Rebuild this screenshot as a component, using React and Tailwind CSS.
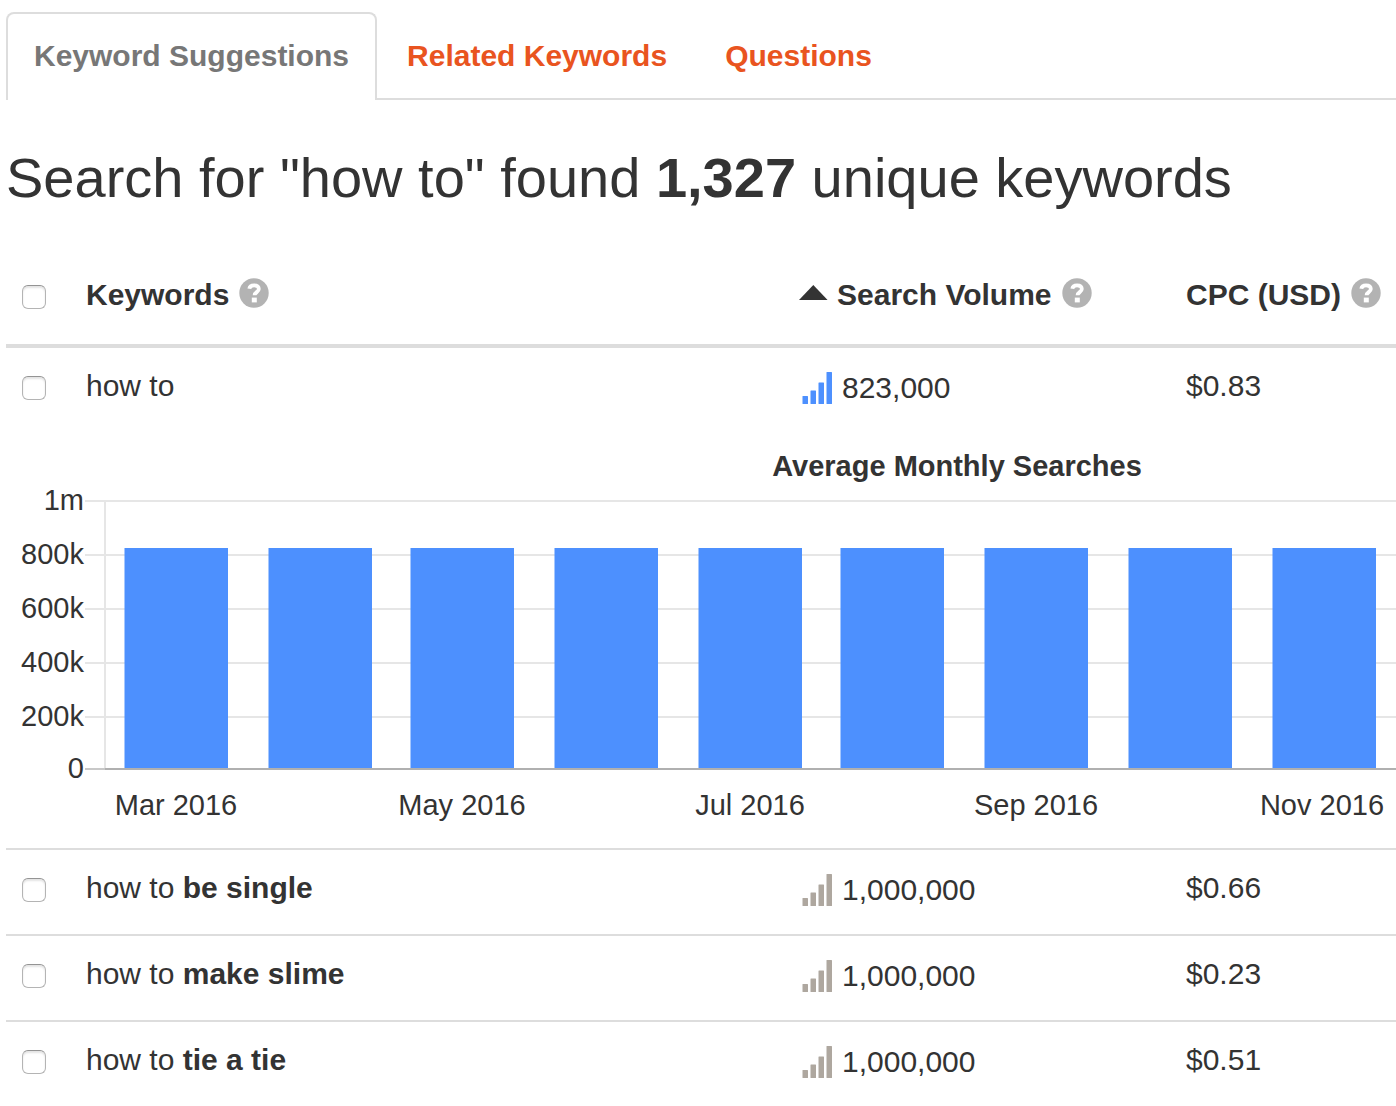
import React from "react";

const tabs = ["Keyword Suggestions", "Related Keywords", "Questions"];

const rows = [
  { base: "how to", extra: "", volume: "823,000", cpc: "$0.83", open: true },
  { base: "how to", extra: "be single", volume: "1,000,000", cpc: "$0.66" },
  { base: "how to", extra: "make slime", volume: "1,000,000", cpc: "$0.23" },
  { base: "how to", extra: "tie a tie", volume: "1,000,000", cpc: "$0.51" },
];

const gridLines = [
  { label: "1m", y: 69 },
  { label: "800k", y: 123 },
  { label: "600k", y: 177 },
  { label: "400k", y: 231 },
  { label: "200k", y: 285 },
];

const bars = [118, 262, 404, 548, 692, 834, 978, 1122, 1266];

const months = [
  { label: "Mar 2016", x: 170 },
  { label: "May 2016", x: 456 },
  { label: "Jul 2016", x: 744 },
  { label: "Sep 2016", x: 1030 },
  { label: "Nov 2016", x: 1316 },
];

function Check({ label }) {
  return (
    <input
      type="checkbox"
      aria-label={label}
      className="block size-6 appearance-none rounded-md border border-[#b4b4b4] border-t-[#949494] bg-white shadow-[inset_0_2px_2px_#e4e4e4] checked:bg-[#4d90fe]"
    />
  );
}

function Help({ label }) {
  return (
    <button type="button" aria-label={label} className="block shrink-0 pb-1">
      <svg width="30" height="30" viewBox="0 0 30 30" className="block">
        <circle cx="15" cy="15" r="14.7" fill="#b3b3b3" />
        <path
          d="M10.3 10.8C10.7 8.3 12.6 7.3 15 7.3c2.8 0 4.8 1.3 4.8 3.7 0 3.1-4.2 3.1-4.2 6.2"
          fill="none"
          stroke="#fff"
          strokeWidth="3.8"
        />
        <rect x="12.8" y="19.6" width="5" height="4.8" fill="#fff" />
      </svg>
    </button>
  );
}

function Signal({ active }) {
  return (
    <svg width="30" height="32" viewBox="0 0 30 32" fill={active ? "#4d90fe" : "#aea79f"} className="block">
      <rect x="0.5" y="24" width="5.5" height="8" rx="0.5" />
      <rect x="8.5" y="18.5" width="5.5" height="13.5" rx="0.5" />
      <rect x="16.5" y="10.5" width="5.5" height="21.5" rx="0.5" />
      <rect x="24.5" y="0" width="5.5" height="32" rx="0.5" />
    </svg>
  );
}

function Chart() {
  return (
    <svg width="100%" height="416" className="block overflow-hidden" fill="#333" fontSize="29" role="img" aria-label="Average Monthly Searches">
      <text x="951" y="44" textAnchor="middle" fontWeight="700">
        Average Monthly Searches
      </text>
      {gridLines.map((g) => (
        <g key={g.label}>
          <rect x="79" y={g.y - 1} width="100%" height="2" fill="#e6e6e6" />
          <text x="78" y={g.y + 9} textAnchor="end">
            {g.label}
          </text>
        </g>
      ))}
      <rect x="98" y="69" width="2" height="268" fill="#e6e6e6" />
      {bars.map((x) => (
        <rect key={x} x={x + 0.5} y="116" width="103.5" height="220" fill="#4d90fe" />
      ))}
      <rect x="79" y="336" width="20" height="2" fill="#c8c8c8" />
      <rect x="99" y="336" width="100%" height="2" fill="#b0b0b0" />
      <text x="78" y="346" textAnchor="end">
        0
      </text>
      {months.map((m) => (
        <text key={m.label} x={m.x} y="383" textAnchor="middle">
          {m.label}
        </text>
      ))}
    </svg>
  );
}

export default function App() {
  return (
    <main className="overflow-hidden bg-white pl-[6px] font-['Liberation_Sans',Arial,sans-serif] text-[30px] leading-[36px] text-[#333]">
      <nav className="flex pt-3 font-bold">
        <a href="#suggestions" aria-current="page" className="rounded-t-lg border-2 border-b-0 border-[#ddd] px-[26px] pt-6 pb-[26px] whitespace-nowrap text-[#777]">
          {tabs[0]}
        </a>
        <div className="flex flex-1 gap-[58px] border-b-2 border-[#ddd] pt-[26px] pl-[30px] whitespace-nowrap text-[#e95420]">
          <a href="#related">{tabs[1]}</a>
          <a href="#questions">{tabs[2]}</a>
        </div>
      </nav>

      <h1 className="mt-[46px] text-[56px] leading-[64px] whitespace-nowrap">
        Search for "how to" found <strong>1,327</strong> unique keywords
      </h1>

      <table className="mt-[36px] w-full table-fixed border-collapse text-left">
        <colgroup>
          <col className="w-[80px]" />
          <col />
          <col className="w-[387px]" />
          <col className="w-[210px]" />
        </colgroup>
        <thead>
          <tr className="h-[100px] border-b-4 border-[#ddd] whitespace-nowrap">
            <th className="pt-1 pl-4">
              <Check label="Select all keywords" />
            </th>
            <th>
              <div className="flex items-center gap-[10px]">
                Keywords <Help label="About keywords" />
              </div>
            </th>
            <th>
              <div className="flex items-center gap-[10px]">
                <button type="button" className="flex items-center gap-2 font-bold">
                  <svg width="30" height="16" viewBox="0 0 30 16" className="mb-1 block">
                    <path d="M14.3 0 L28.6 15 H0 Z" fill="#333" />
                  </svg>
                  Search Volume
                </button>
                <Help label="About search volume" />
              </div>
            </th>
            <th>
              <div className="flex items-center gap-[10px]">
                CPC (USD) <Help label="About CPC" />
              </div>
            </th>
          </tr>
        </thead>
        <tbody>
          {rows.map((r) => (
            <React.Fragment key={r.base + r.extra}>
              <tr className={r.open ? "whitespace-nowrap" : "border-t-2 border-[#ddd] whitespace-nowrap"}>
                <td className="pt-[22px] pb-[26px] pl-4">
                  <Check label={`Select ${r.base} ${r.extra}`} />
                </td>
                <td className="pt-5 pb-7">
                  {r.base} <strong>{r.extra}</strong>
                </td>
                <td className="pt-[22px] pb-[26px]">
                  <div className="flex items-center gap-[10px] pl-[3px]">
                    <Signal active={r.open} /> {r.volume}
                  </div>
                </td>
                <td className="pt-5 pb-7">{r.cpc}</td>
              </tr>
              {r.open && (
                <tr>
                  <td colSpan={4}>
                    <Chart />
                  </td>
                </tr>
              )}
            </React.Fragment>
          ))}
        </tbody>
      </table>
    </main>
  );
}
